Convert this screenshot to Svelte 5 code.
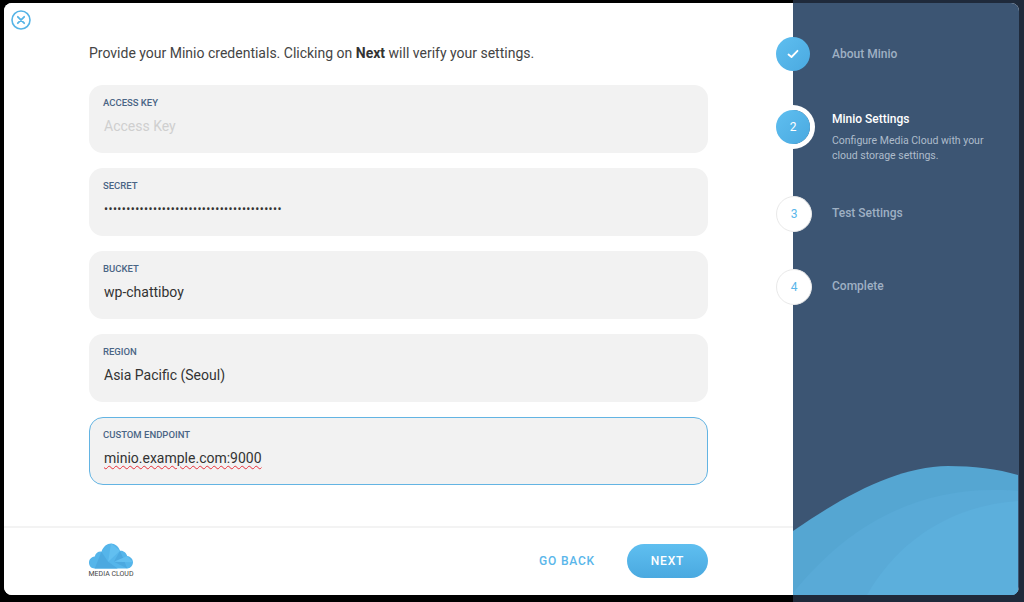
<script>
  const fields = [
    { label: 'ACCESS KEY', value: 'Access Key', kind: 'placeholder' },
    { label: 'SECRET', value: '•'.repeat(40), kind: 'secret' },
    { label: 'BUCKET', value: 'wp-chattiboy', kind: '' },
    { label: 'REGION', value: 'Asia Pacific (Seoul)', kind: '' },
    { label: 'CUSTOM ENDPOINT', value: 'minio.example.com:9000', kind: 'focus' }
  ];
</script>

<div class="stage">
  <div class="modal">
    <main class="content">
      <button class="close" aria-label="Close">
        <svg width="20" height="20" viewBox="0 0 20 20" fill="none" stroke="#56b4e6">
          <circle cx="10" cy="10" r="9" stroke-width="1.6" />
          <path d="M6.800 6.800l6.400 6.400M13.200 6.800l-6.400 6.400" stroke-width="1.800" stroke-linecap="round" />
        </svg>
      </button>
      <div class="form">
        <p class="intro">Provide your Minio credentials. Clicking on <b>Next</b> will verify your settings.</p>
        {#each fields as f}
          <div class="field {f.kind}">
            <span class="label">{f.label}</span>
            <span class="value"><span>{f.value}</span></span>
          </div>
        {/each}
      </div>
      <footer class="footer">
        <div class="logo">
          <svg width="44" height="26" viewBox="0 0 46 26">
            <path fill="#55b5ea" d="M6 26C2 26 0 23 0 20s2-6 6-6.500C7 10 10 8 13 8.500 15 3 19 0 23 0s8 3 9.500 7.500C36 7 39 9.500 40 13c3.500 .5 6 3.500 6 6.500S43.500 26 40 26z" />
            <path fill="#4ca9e0" d="M6 26L13 8.500 20 19 30 26zM32.500 7.500L26 19 40 26z" />
            <path fill="#62bff0" d="M23 0L20 19 32.500 7.500zM40 13L26 19 46 19.500z" />
          </svg>
          <span>MEDIA CLOUD</span>
        </div>
        <div class="actions">
          <button class="back">GO BACK</button>
          <button class="next">NEXT</button>
        </div>
      </footer>
    </main>
    <aside class="side">
      <svg class="waves" width="225" height="130" viewBox="0 0 225 130" preserveAspectRatio="none">
        <path fill="#55a6d2" d="M0 66C55 28 105 2 155 1c25 0 50 3 70 9v120H0z" />
        <path fill="#59aad7" d="M0 128C50 66 115 25 200 25c10 0 20 0 25 1v104H0z" />
        <path fill="#5cafdc" d="M74 130C105 75 160 40 225 36v94z" />
      </svg>
      <ol class="steps">
        <li class="step done">
          <span class="dot">
            <svg width="12" height="10" viewBox="0 0 12 10" fill="none" stroke="#fff" stroke-width="1.800" stroke-linecap="round" stroke-linejoin="round"><path d="M1.500 5.500L4.500 8 10.500 1.800" /></svg>
          </span>
          <div class="text"><h3>About Minio</h3></div>
        </li>
        <li class="step active">
          <span class="dot">2</span>
          <div class="text">
            <h3>Minio Settings</h3>
            <p>Configure Media Cloud with your cloud storage settings.</p>
          </div>
        </li>
        <li class="step todo">
          <span class="dot">3</span>
          <div class="text"><h3>Test Settings</h3></div>
        </li>
        <li class="step todo">
          <span class="dot">4</span>
          <div class="text"><h3>Complete</h3></div>
        </li>
      </ol>
    </aside>
  </div>
</div>

<style>
  :global(body) { margin: 0; background: #000; }
  * { box-sizing: border-box; }
  .stage {
    width: 1024px;
    height: 602px;
    padding: 3px 5px 7px 4px;
    background: linear-gradient(90deg, #000 793px, #1f2a3b 793px);
    font-family: Roboto, sans-serif;
    overflow: hidden;
  }
  .modal {
    display: flex;
    height: 592px;
    border-radius: 8px;
    overflow: hidden;
    background: #fff;
  }
  .content {
    position: relative;
    width: 789px;
    display: flex;
    flex-direction: column;
    background: #fff;
  }
  .close {
    position: absolute;
    left: 7px;
    top: 7px;
    width: 20px;
    height: 20px;
    padding: 0;
    border: 0;
    background: none;
    display: block;
  }
  .close svg { display: block; }
  .form {
    flex: 1;
    padding: 41px 85px 0;
    display: flex;
    flex-direction: column;
    gap: 15px;
  }
  .intro {
    margin: 0 0 7px;
    height: 19px;
    font-size: 14px;
    line-height: 19px;
    color: #444;
    white-space: nowrap;
  }
  .intro b { font-weight: 700; color: #333; }
  .field {
    height: 68px;
    border-radius: 14px;
    background: #f2f2f2;
    padding: 12px 14px 0;
    display: flex;
    flex-direction: column;
  }
  .label {
    font-size: 9.500px;
    line-height: 12px;
    font-weight: 500;
    color: #4a6585;
  }
  .value {
    margin-top: 7px;
    padding-left: 1px;
    font-size: 14px;
    line-height: 20px;
    color: #333;
    white-space: nowrap;
  }
  .placeholder .value { color: #cfcfcf; }
  .secret .value { font-size: 12px; letter-spacing: 0.4px; color: #333; }
  .focus { border: 1px solid #63b4e3; padding: 11px 13px 0; }
  .focus .value span { text-decoration: underline wavy #e8303a 1px; text-underline-offset: 2px; }
  .footer {
    height: 69px;
    border-top: 2px solid #f3f3f3;
    padding: 15px 85px 0;
    display: flex;
    justify-content: space-between;
    align-items: flex-start;
  }
  .logo { display: flex; flex-direction: column; align-items: center; gap: 1px; width: 44px; }
  .logo svg { display: block; }
  .logo span { font-size: 7px; line-height: 9px; color: #444; white-space: nowrap; }
  .actions { display: flex; align-items: center; gap: 32px; margin-top: 1px; }
  .actions button { border: 0; padding: 0; font-family: inherit; font-size: 12px; font-weight: 500; letter-spacing: 0.8px; }
  .back { background: none; color: #59b6ea; }
  .next {
    width: 81px;
    height: 34px;
    border-radius: 17px;
    color: #fff;
    background: linear-gradient(180deg, #5fbff0, #4aa9e0);
  }
  .side {
    position: relative;
    width: 226px;
    background: #3c5573;
    padding-top: 34px;
  }
  .waves { position: absolute; left: 0; bottom: 0; display: block; }
  .steps {
    position: relative;
    list-style: none;
    margin: 0;
    padding: 0;
  }
  .step { display: flex; align-items: flex-start; }
  .dot {
    flex: none;
    width: 34px;
    height: 34px;
    margin-left: -17px;
    border-radius: 50%;
    display: flex;
    align-items: center;
    justify-content: center;
    font-size: 12px;
    color: #fff;
    background: linear-gradient(135deg, #5fbff0, #4aa9e0);
  }
  .text { margin-left: 22px; }
  h3 {
    margin: 0;
    font-size: 12px;
    font-weight: 500;
    line-height: 16px;
    color: #9fb0c3;
    white-space: nowrap;
  }
  p { margin: 0; }
  .done { height: 73px; }
  .done .text { padding-top: 9px; }
  .active { height: 87px; }
  .active .dot { box-shadow: 0 0 0 5px #fff; }
  .active .text { padding-top: 1px; }
  .active h3 { color: #fff; }
  .active p {
    margin-top: 6px;
    width: 165px;
    font-size: 10.500px;
    line-height: 15px;
    color: #aebccb;
  }
  .todo { height: 73px; }
  .todo .dot {
    width: 36px;
    height: 36px;
    margin-top: -1px;
    background: #fff;
    border: 1px solid #e9e9e9;
    color: #59b6ea;
  }
  .todo .text { margin-left: 20px; padding-top: 8px; }
</style>
